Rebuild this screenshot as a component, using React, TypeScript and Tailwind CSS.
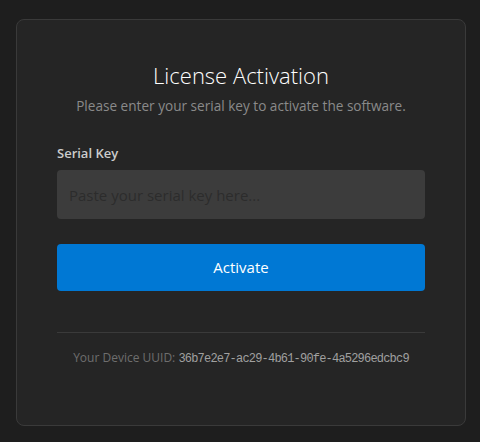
export default function App() {
  return (
    <div className="min-h-[442px] bg-[#1e1e1e] pl-4 pt-[19px] font-['Open_Sans',sans-serif]">
      <div className="h-[407px] w-[450px] rounded-lg border border-[#3a3a3a] bg-[#252525] px-10 pt-10">
        <h1 className="text-center text-[22px] leading-[30px] font-light text-white">License Activation</h1>
        <p className="mt-[6px] text-center text-[13.6px] leading-5 text-[#8a8a8a]">
          Please enter your serial key to activate the software.
        </p>

        <label className="mt-[27px] block text-[13px] leading-5 font-semibold text-[#cccccc]">Serial Key</label>
        <input
          type="text"
          placeholder="Paste your serial key here..."
          className="mt-[7px] block h-[49px] w-full rounded bg-[#3c3c3c] px-3 text-[15px] text-white outline-none placeholder:text-[#2c2c2c]"
        />

        <button className="mt-[25px] h-[47px] w-full rounded bg-[#0078d4] text-[15px] text-white">Activate</button>

        <div className="mt-[41px] h-px bg-[#3a3a3a]" />

        <p className="mt-[15px] text-center text-[12px] leading-5 text-[#6e6e6e]">
          Your Device UUID:{' '}
          <span className="font-['Liberation_Mono',monospace] text-[12px] tracking-[-0.8px] text-[#a0a0a0]">
            36b7e2e7-ac29-4b61-90fe-4a5296edcbc9
          </span>
        </p>
      </div>
    </div>
  );
}
